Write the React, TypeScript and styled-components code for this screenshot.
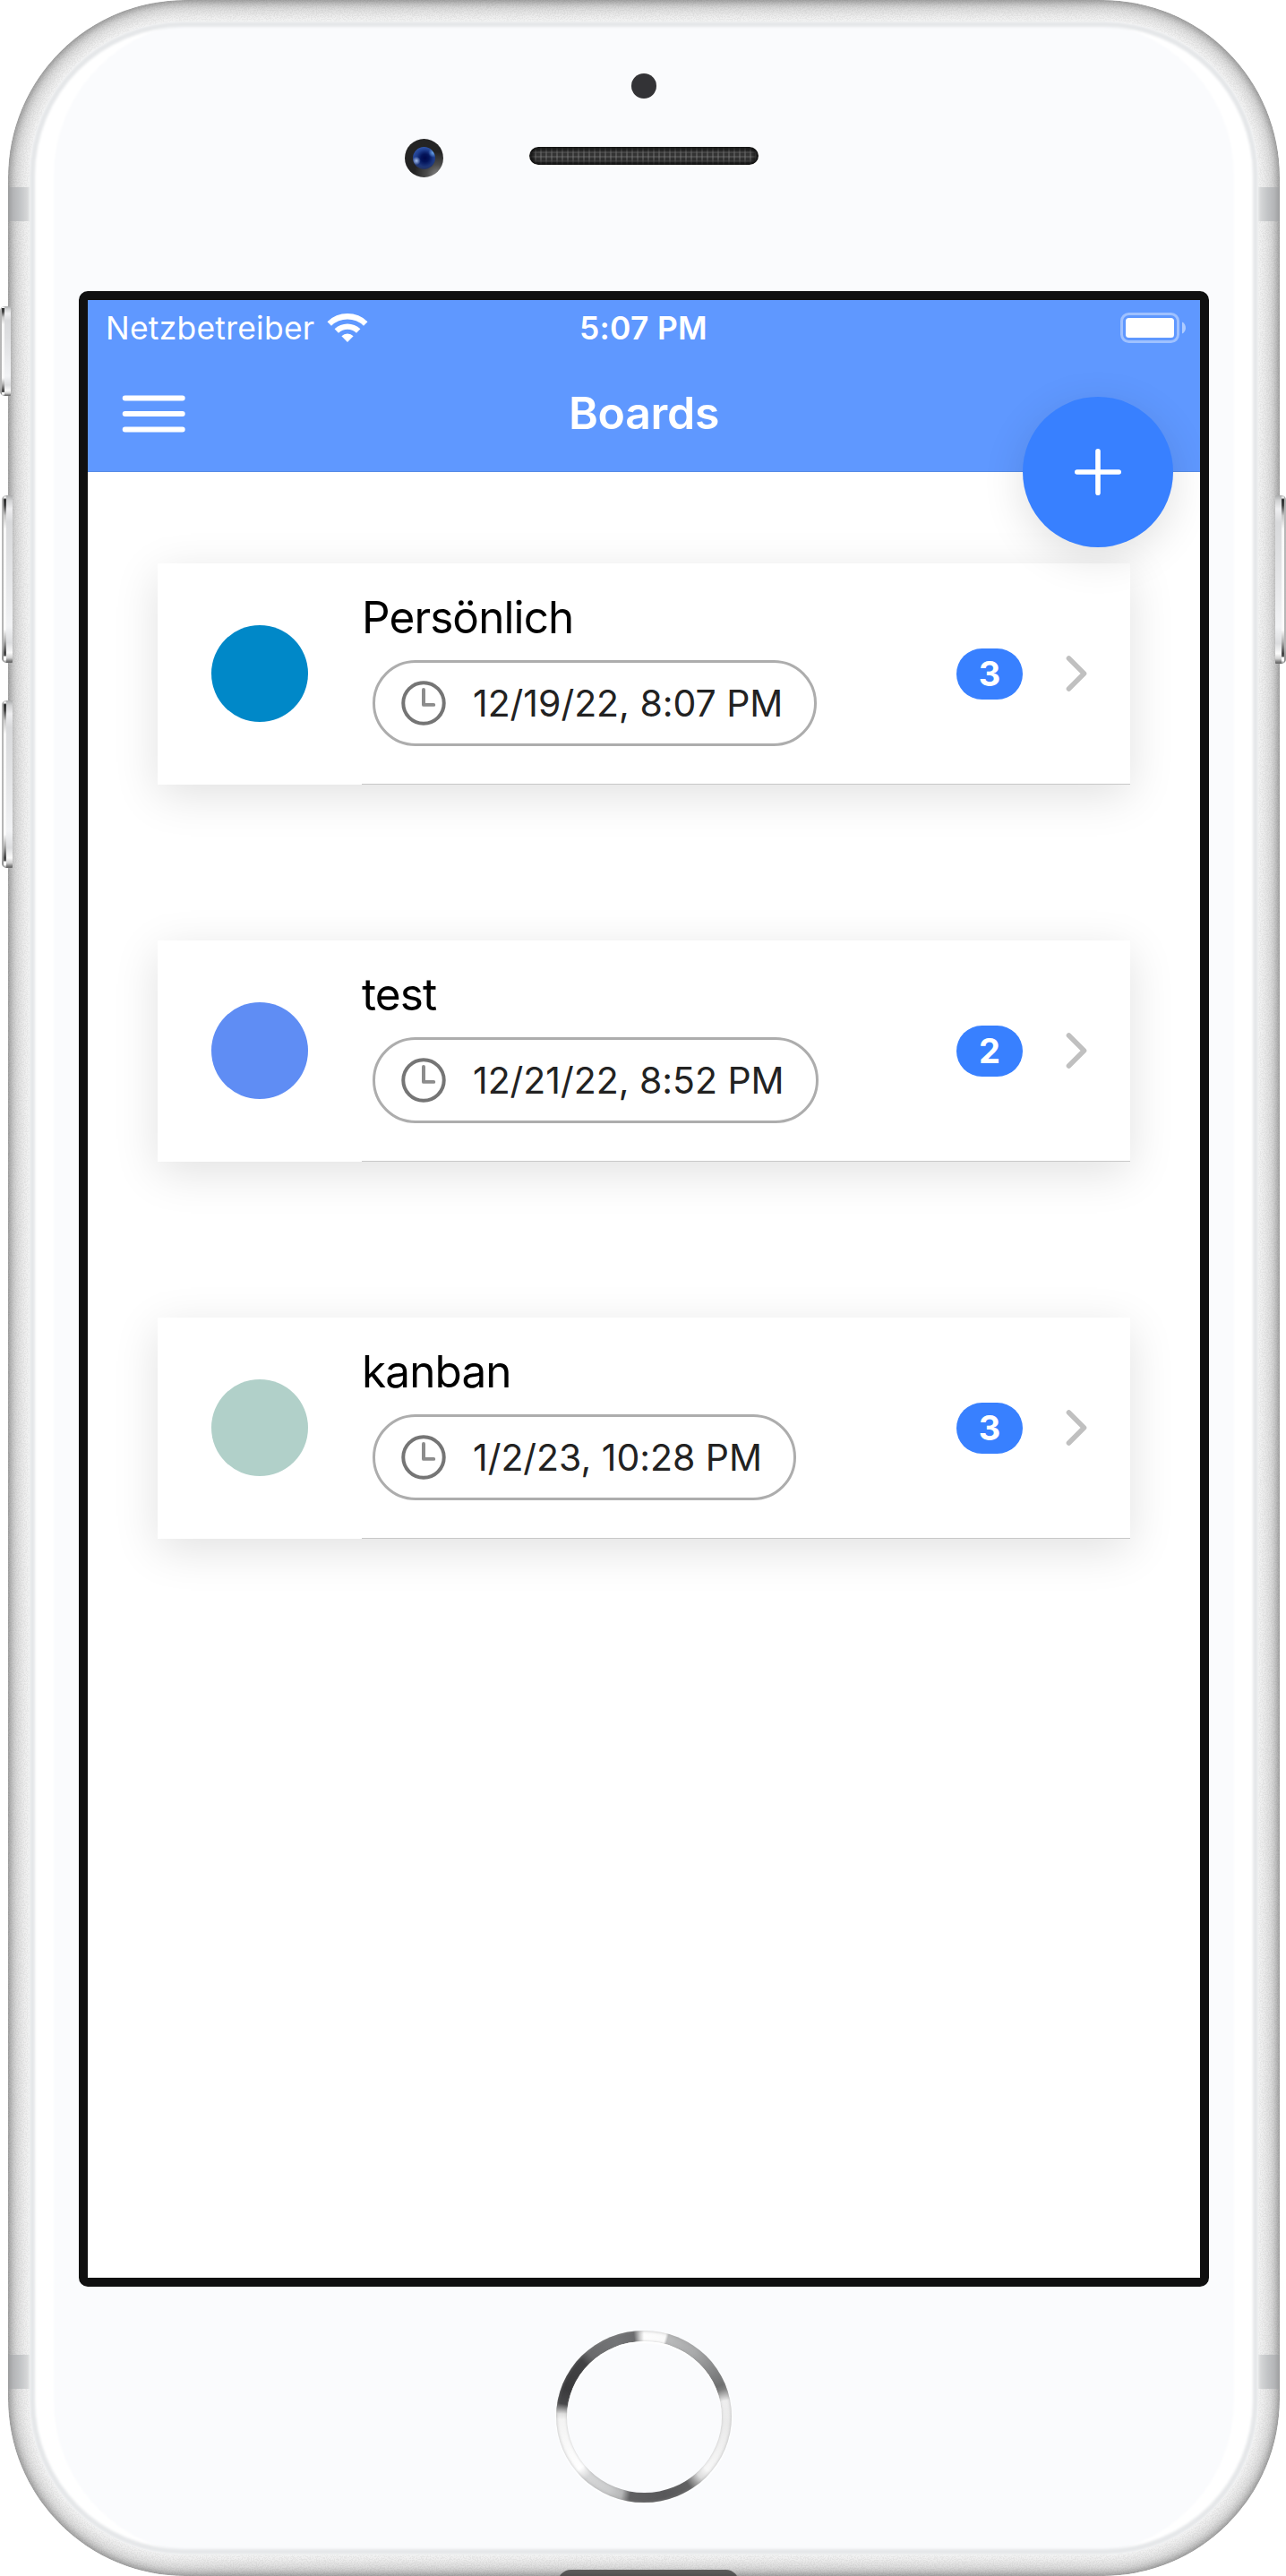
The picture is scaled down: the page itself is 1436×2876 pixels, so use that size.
import React from "react";
import styled, { createGlobalStyle, css } from "styled-components";

const GlobalStyle = createGlobalStyle`
  *, *::before, *::after { box-sizing: border-box; }
  body { margin: 0; background: #fff; font-family: Inter, "Liberation Sans", sans-serif; }
`;

const Stage = styled.div`
  position: relative;
  width: 1436px;
  height: 2876px;
  padding: 0 7px 0 9px;
  overflow: hidden;
`;

/* ---------- phone hardware ---------- */

const Body = styled.div`
  position: relative;
  width: 1420px;
  height: 2876px;
  padding: 24px;
  border-radius: 198px;
  overflow: hidden;
  background: #f6f6f6;
`;

const Rim = styled.div`
  position: absolute;
  inset: 0;
  border-radius: 198px;
  box-shadow: inset 0 0 8px 1px rgba(0, 0, 0, 0.3), inset 0 0 22px 6px rgba(0, 0, 0, 0.3);
`;

const Grain = styled.svg`
  position: absolute;
  inset: 0;
  width: 1420px;
  height: 2876px;
  opacity: 0.04;
`;

const Band = styled.div<{ $side: "left" | "right"; $top: number }>`
  position: absolute;
  top: ${(p) => p.$top}px;
  ${(p) => p.$side}: 0;
  width: 24px;
  height: 38px;
  background: linear-gradient(
    to ${(p) => (p.$side === "left" ? "right" : "left")},
    #9c9d9e, #b4b5b7 25%, #c4c6c8 60%, #d6d7d8 90%, #dedfe0
  );
`;

const Port = styled.div`
  position: absolute;
  left: 614px;
  bottom: -22px;
  width: 202px;
  height: 29px;
  border-radius: 24px;
  background: linear-gradient(#5e5e5e, #505050 24%);
`;

const Glass = styled.div`
  position: relative;
  display: flex;
  flex-direction: column;
  align-items: center;
  height: 2828px;
  border-radius: 172px;
  background: #fafbfd;
  box-shadow:
    0 0 3px 0 #f1f2f3,
    inset 0 0 2px 1px #f0f1f2,
    inset 0 0 3px 6px #e5e7e9,
    inset 27px 0 3px 0 #fff,
    inset -27px 0 3px 0 #fff;
`;

const SideButton = styled.div<{ $x: number; $y: number; $h: number; $flip?: boolean }>`
  position: absolute;
  left: ${(p) => p.$x}px;
  top: ${(p) => p.$y}px;
  width: 12px;
  height: ${(p) => p.$h}px;
  display: flex;
  border-radius: 5px 1px 1px 5px;
  overflow: hidden;
  ${(p) => p.$flip && css`transform: scaleX(-1);`}
`;

const ButtonEdge = styled.div`
  width: 2px;
  background: linear-gradient(#aaa, #b8b8b8 10%, #b5b5b5 90%, #888);
`;

const ButtonBevel = styled.div`
  width: 3px;
  background: linear-gradient(
    #bbb, #eee 1.5%, #2c2d2e 2.5%, #444 6%, #c8c8c8 12%, #f8f8f8 20%,
    #fafafa 80%, #b0b0b0 87%, #444 94%, #555 95.5%, #fff 96.5%, #fff 98%, #777
  );
`;

const ButtonFace = styled.div`
  flex: 1;
  background: linear-gradient(
    #a9aaab, #d0d1d2 3%, #efeff1 8%, #d9dadc 16%, #dfe0e2 35%,
    #f2f3f5 78%, #dcdddf 88%, #fbfbfb 94%, #d0d0d0 97%, #777 99%, #666
  );
`;

const TopBezel = styled.div`
  width: 100%;
  height: 301px;
  padding-top: 58px;
  flex: none;
`;

const Sensor = styled.div`
  width: 28px;
  height: 28px;
  margin: 0 auto;
  border-radius: 50%;
  background: #333336;
`;

const SpeakerRow = styled.div`
  display: flex;
  align-items: center;
  margin-top: 45px;
  padding-left: 419px;
`;

const Camera = styled.div`
  display: grid;
  place-items: center;
  width: 43px;
  height: 43px;
  border-radius: 50%;
  background: radial-gradient(circle at 85% 95%, #8a8a8a 0, #4c4c4c 22%, #232323 48%, #252525 100%);
`;

const Lens = styled.div`
  width: 25px;
  height: 25px;
  border-radius: 50%;
  background:
    radial-gradient(circle at 16% 62%, rgba(190, 215, 255, 0.85) 0, rgba(120, 150, 220, 0) 18%),
    radial-gradient(circle at 90% 26%, rgba(110, 170, 240, 0.9) 0, rgba(80, 130, 220, 0) 18%),
    radial-gradient(circle at 54% 50%, #00094a 0, #03145a 24%, rgba(20, 50, 130, 0.5) 52%, rgba(0, 0, 0, 0) 70%),
    linear-gradient(#3257ad, #22418f 55%, #27335c);
`;

const Speaker = styled.div`
  width: 256px;
  height: 20px;
  margin: -5px 0 0 96px;
  border-radius: 10px;
  background:
    repeating-linear-gradient(90deg, rgba(125, 125, 125, 0.42) 0 2px, transparent 2px 6px),
    repeating-linear-gradient(rgba(125, 125, 125, 0.32) 0 2px, transparent 2px 5px),
    #343434;
  box-shadow: inset 0 0 5px 3px #0c0c0c, 0 1px 2px 1px #fff;
`;

const BottomBezel = styled.div`
  display: grid;
  place-items: center;
  flex: 1;
  padding-bottom: 9px;
`;

const HomeRing = styled.div`
  display: grid;
  place-items: center;
  width: 196px;
  height: 192px;
  border-radius: 50%;
  background: conic-gradient(
    #fdfdfd 0deg, #fafafa 15deg, #b9babb 17deg, #a9aaab 38deg, #6f7071 68deg,
    #808080 71deg, #eeeeee 79deg, #eaeaea 95deg, #f7f7f7 130deg, #dcdcdc 137deg,
    #616162 147deg, #58585a 165deg, #606062 190deg, #b6b7b8 196deg, #cacbcc 205deg,
    #d6d7d8 223deg, #ffffff 231deg, #f3f3f3 268deg, #dddddd 272deg, #48484a 279deg,
    #39393b 290deg, #434345 312deg, #6a6a6c 319deg, #747577 340deg, #6c6c6e 353deg,
    #c9c9c9 357deg, #fdfdfd 360deg
  );
  box-shadow: inset 0 0 3px 1px rgba(140, 140, 140, 0.35), 0 1px 1px 1px #fdfeff;
`;

const HomeFace = styled.div`
  width: 173px;
  height: 169px;
  border-radius: 50%;
  background: #fafbfd;
  box-shadow: 0 0 3px rgba(120, 120, 120, 0.4), inset 0 2px 2px #fff;
`;

/* ---------- screen ---------- */

const ScreenFrame = styled.div`
  flex: none;
  width: 1262px;
  height: 2228px;
  border: 10px solid #101010;
  border-radius: 10px;
  background: #101010;
`;

const Screen = styled.div`
  position: relative;
  width: 1242px;
  height: 2208px;
  overflow: hidden;
  background: #fff;
`;

const Header = styled.header`
  height: 192px;
  background: #5f98ff;
  border-bottom: 1px solid #568be6;
  color: #fff;
`;

const StatusBar = styled.div`
  display: grid;
  grid-template-columns: 1fr auto 1fr;
  align-items: center;
  height: 60px;
  padding: 0 16px 0 20px;
  font-size: 35.4px;
  line-height: 60px;
`;

const Carrier = styled.div`
  display: flex;
  align-items: center;
  gap: 14px;
  letter-spacing: 0.27px;
`;

const CarrierName = styled.span`
  padding-top: 2px;
`;

const Clock = styled.div`
  padding: 2px 5px 0 0;
  font-weight: 600;
  letter-spacing: 0.3px;
`;

const BatteryIcon = styled.svg`
  justify-self: end;
`;

const Toolbar = styled.div`
  display: grid;
  grid-template-columns: 1fr auto 1fr;
  align-items: center;
  height: 131px;
  padding: 0 36px;
`;

const MenuButton = styled.button`
  display: flex;
  padding: 3px 0 0;
  border: 0;
  background: none;
`;

const Title = styled.h1`
  margin: 0;
  font-size: 50px;
  font-weight: 600;
  line-height: 60px;
  letter-spacing: -0.3px;
`;

const Fab = styled.button`
  position: absolute;
  top: 108px;
  right: 30px;
  display: grid;
  place-items: center;
  width: 168px;
  height: 168px;
  padding: 0;
  border: 0;
  border-radius: 50%;
  background: #3880ff;
  box-shadow: 0 12px 48px rgba(0, 0, 0, 0.12);
`;

const BoardList = styled.main`
  display: flex;
  flex-direction: column;
  gap: 174px;
  padding: 102px 78px 0;
`;

const Card = styled.article`
  display: flex;
  align-items: center;
  height: 247px;
  padding-left: 60px;
  background: #fff;
  box-shadow: 0 12px 48px rgba(0, 0, 0, 0.12);
`;

const Avatar = styled.div<{ $color: string }>`
  flex: none;
  width: 108px;
  height: 108px;
  margin: 0 60px 1px 0;
  border-radius: 50%;
  background: ${(p) => p.$color};
`;

const CardInner = styled.div`
  display: flex;
  flex: 1;
  align-items: center;
  height: 247px;
  padding-right: 48px;
  border-bottom: 1px solid #c8c8c8;
`;

const Label = styled.div`
  flex: 1;
  align-self: flex-start;
  padding-top: 30px;
`;

const Name = styled.h2`
  margin: 0;
  color: #000;
  font-size: 49.5px;
  font-weight: 400;
  line-height: 60px;
  letter-spacing: -0.9px;
`;

const Chip = styled.div`
  display: inline-flex;
  align-items: center;
  gap: 25px;
  height: 96px;
  margin: 18px 0 0 12px;
  padding: 0 35px 0 24px;
  border: 3px solid #adadad;
  border-radius: 48px;
  color: #222;
  font-size: 41px;
  line-height: 60px;
  letter-spacing: -0.03px;
  white-space: nowrap;
`;

const Badge = styled.span`
  min-width: 74px;
  height: 57px;
  border-radius: 30px;
  background: #3880ff;
  color: #fff;
  font-size: 38px;
  font-weight: 700;
  line-height: 57px;
  text-align: center;
`;

const Chevron = styled.svg`
  margin-left: 48px;
`;

const boards = [
  { name: "Persönlich", due: "12/19/22, 8:07 PM", count: 3, color: "#0088c8" },
  { name: "test", due: "12/21/22, 8:52 PM", count: 2, color: "#5f8df4" },
  { name: "kanban", due: "1/2/23, 10:28 PM", count: 3, color: "#b1d0c9" },
];

function HardwareButton(props: { x: number; y: number; h: number; flip?: boolean }) {
  return (
    <SideButton $x={props.x} $y={props.y} $h={props.h} $flip={props.flip}>
      <ButtonEdge />
      <ButtonBevel />
      <ButtonFace />
    </SideButton>
  );
}

function WifiIcon() {
  return (
    <svg width="46" height="34" viewBox="0 0 46 34" fill="#fff">
      <path d="M0.5 10.2 A32 32 0 0 1 45.5 10.2 L41 14.7 A25.8 25.8 0 0 0 5 14.7 Z" />
      <path d="M8.6 18.3 A20.7 20.7 0 0 1 37.4 18.3 L33 22.7 A14.4 14.4 0 0 0 13 22.7 Z" />
      <path d="M16.4 26.2 A9.4 9.4 0 0 1 29.6 26.2 L23 33 Z" />
    </svg>
  );
}

function BoardCard({ name, due, count, color }: (typeof boards)[number]) {
  return (
    <Card>
      <Avatar $color={color} />
      <CardInner>
        <Label>
          <Name>{name}</Name>
          <Chip>
            <svg width="60" height="60" viewBox="0 0 512 512" fill="none" stroke="#757575" strokeWidth="34">
              <circle cx="256" cy="256" r="194" />
              <path d="M256 128v144h96" stroke="#8c8c8c" strokeLinecap="round" strokeLinejoin="round" />
            </svg>
            <span>{due}</span>
          </Chip>
        </Label>
        <Badge>{count}</Badge>
        <Chevron width="24" height="42" viewBox="0 0 24 42" fill="none">
          <path d="M3.5 4 20.5 21 3.5 38" stroke="#c0c0c0" strokeWidth="5.6" strokeLinecap="round" strokeLinejoin="round" />
        </Chevron>
      </CardInner>
    </Card>
  );
}

export default function App() {
  return (
    <Stage>
      <GlobalStyle />
      <Body>
        <Rim />
        <Grain>
          <filter id="grain">
            <feTurbulence type="fractalNoise" baseFrequency="0.7" numOctaves={2} />
            <feColorMatrix values="0 0 0 0 0  0 0 0 0 0  0 0 0 0 0  6 0 0 0 -2.6" />
          </filter>
          <rect width="1420" height="2876" filter="url(#grain)" />
        </Grain>
        <Band $side="left" $top={209} />
        <Band $side="right" $top={209} />
        <Band $side="left" $top={2629} />
        <Band $side="right" $top={2629} />
        <Port />
        <Glass>
          <TopBezel>
            <Sensor />
            <SpeakerRow>
              <Camera>
                <Lens />
              </Camera>
              <Speaker />
            </SpeakerRow>
          </TopBezel>
          <ScreenFrame>
            <Screen>
              <Header>
                <StatusBar>
                  <Carrier>
                    <CarrierName>Netzbetreiber</CarrierName>
                    <WifiIcon />
                  </Carrier>
                  <Clock>5:07 PM</Clock>
                  <BatteryIcon width="73" height="34" viewBox="0 0 73 34">
                    <rect x="1.5" y="1.5" width="63" height="31" rx="8" fill="none" stroke="#fff" strokeOpacity="0.4" strokeWidth="3" />
                    <rect x="6" y="6" width="54" height="22" rx="3.5" fill="#fff" />
                    <path d="M69 10.5c5.3 2.2 5.3 10.8 0 13z" fill="#fff" fillOpacity="0.5" />
                  </BatteryIcon>
                </StatusBar>
                <Toolbar>
                  <MenuButton aria-label="Menu">
                    <svg width="76" height="46" viewBox="0 0 76 46" stroke="#fff" strokeWidth="6" strokeLinecap="round">
                      <path d="M5.7 5.5h64M5.7 23h64M5.7 40.5h64" />
                    </svg>
                  </MenuButton>
                  <Title>Boards</Title>
                </Toolbar>
              </Header>
              <BoardList>
                {boards.map((b) => (
                  <BoardCard key={b.name} {...b} />
                ))}
              </BoardList>
              <Fab aria-label="Add board">
                <svg width="60" height="60" viewBox="0 0 60 60" stroke="#fff" strokeWidth="5.6" strokeLinecap="round">
                  <path d="M30 6.8v46.4M6.8 30h46.4" />
                </svg>
              </Fab>
            </Screen>
          </ScreenFrame>
          <BottomBezel>
            <HomeRing>
              <HomeFace />
            </HomeRing>
          </BottomBezel>
        </Glass>
      </Body>
      <HardwareButton x={0} y={342} h={100} />
      <HardwareButton x={2} y={553} h={187} />
      <HardwareButton x={2} y={782} h={187} />
      <HardwareButton x={1424} y={553} h={188} flip />
    </Stage>
  );
}
